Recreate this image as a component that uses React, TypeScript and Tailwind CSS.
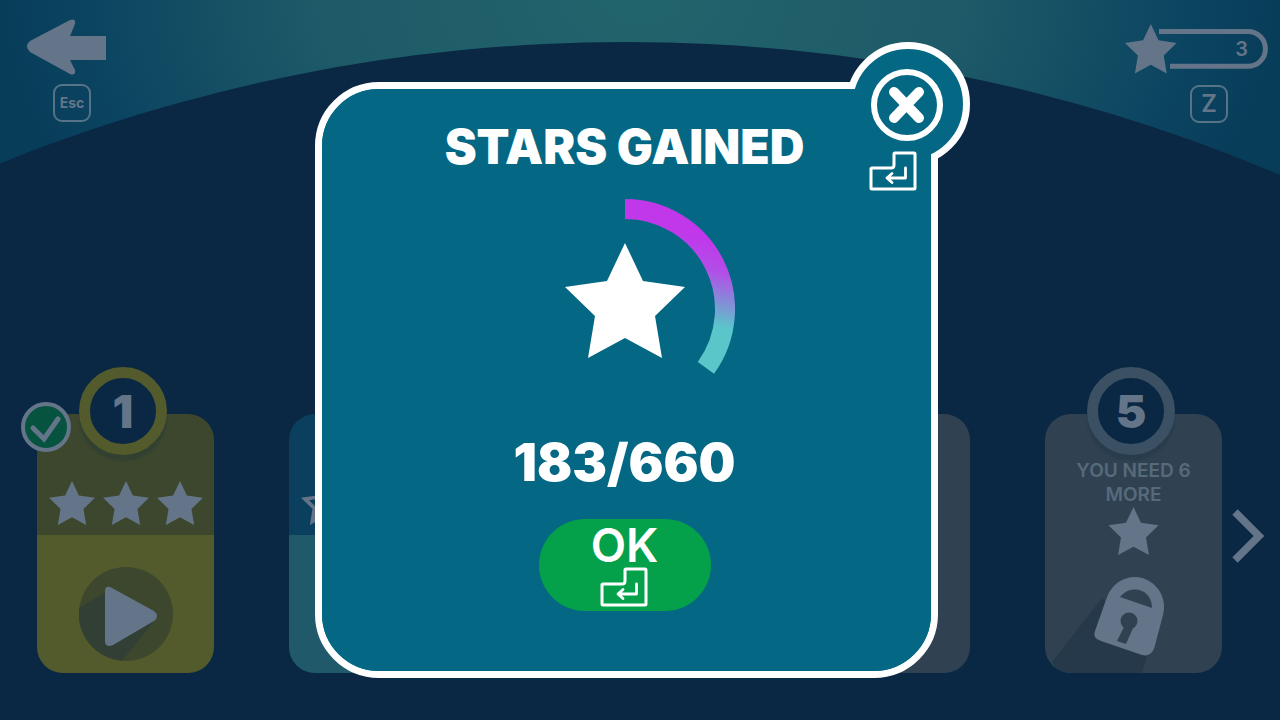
import React from 'react'
import clsx from 'clsx'

type Theme = 'olive' | 'teal' | 'locked'

interface Level {
  id: number
  theme: Theme
}

const LEVELS: Level[] = [
  { id: 1, theme: 'olive' },
  { id: 2, theme: 'teal' },
  { id: 3, theme: 'locked' },
  { id: 4, theme: 'locked' },
  { id: 5, theme: 'locked' },
]

const STAR_POINTS = '60,0 78,38 120,44 90,73 97,115 60,95 23,115 30,73 0,44 42,38'

function Star({ className, outline }: { className?: string; outline?: boolean }) {
  return (
    <svg viewBox="0 0 120 115" className={className} aria-hidden="true">
      {outline ? (
        <path
          d="M60 0L78 38L120 44L90 73L97 115L60 95L23 115L30 73L0 44L42 38ZM60 21L48 46L21 50L40 69L36 96L60 83L84 96L80 69L99 50L72 46Z"
          fill="currentColor"
          fillRule="evenodd"
        />
      ) : (
        <polygon points={STAR_POINTS} fill="currentColor" />
      )}
    </svg>
  )
}

/** Outline of the Enter key, used as a shortcut hint */
function EnterKey() {
  return (
    <svg viewBox="0 0 49 40" className="h-10 w-[49px]" fill="none" stroke="currentColor" strokeLinejoin="round" aria-hidden="true">
      <path d="M3 17H22Q25 17 25 14V3Q25 2 26 2H45Q46 2 46 3V37Q46 38 45 38H3Q2 38 2 37V18Q2 17 3 17Z" strokeWidth="3" />
      <path d="M36.500 17V27H18M23 22.500L18 27L23 31.500" strokeWidth="2.800" strokeLinecap="round" />
    </svg>
  )
}

function KeyHint({ children, className }: { children: React.ReactNode; className?: string }) {
  return (
    <kbd
      className={clsx(
        'flex size-[38px] items-center justify-center rounded-[9px] border-2 border-[#567389] font-[Inter,sans-serif] text-[#647589]',
        className
      )}
    >
      {children}
    </kbd>
  )
}

/** Teal sky with the dark planet rising over it */
function Backdrop() {
  return (
    <div className="absolute inset-0 bg-[radial-gradient(ellipse_640px_400px_at_50%_0%,#22646c_0%,#1e5a68_50%,#0a4360_88%,#083d59_100%)]">
      <svg viewBox="0 0 1280 720" preserveAspectRatio="xMidYMin slice" className="size-full" aria-hidden="true">
        <circle cx="626" cy="1716" r="1674" fill="#0a2843" />
      </svg>
    </div>
  )
}

function Header() {
  return (
    <header className="flex items-start justify-between pr-3 pl-[27px]">
      <div className="flex w-[90px] flex-col items-center pt-[19px]">
        <button type="button" aria-label="Back" className="w-full">
          <svg viewBox="0 0 90 56" className="h-14 w-full" fill="#647589" aria-hidden="true">
            <path d="M3 22L43 1Q49 -1 48 5L43 17H79V41H43L48 51Q49 57 43 55L3 33Q-3 27 3 22Z" />
          </svg>
        </button>
        <KeyHint className="mt-[9px] text-sm font-bold">Esc</KeyHint>
      </div>

      <div className="flex flex-col items-end pt-[22px]">
        <button type="button" aria-label="Stars: 3" className="grid h-[54px] w-[143px] items-center text-[#647589]">
          <svg viewBox="0 0 143 54" className="col-start-1 row-start-1 h-[54px] w-full" aria-hidden="true">
            <path d="M34 9.5H123A17.4 17.4 0 0 1 123 44.3H45" fill="none" stroke="currentColor" strokeWidth="5" />
            <polygon points={STAR_POINTS} transform="translate(0 2) scale(0.43)" fill="currentColor" />
          </svg>
          <span className="col-start-1 row-start-1 pr-5 text-right text-xl font-semibold">3</span>
        </button>
        <KeyHint className="mt-[9px] mr-10 text-2xl font-semibold">Z</KeyHint>
      </div>
    </header>
  )
}

function PlayIcon() {
  return (
    <svg viewBox="0 0 94 94" className="size-[94px]" aria-hidden="true">
      <circle cx="47" cy="47" r="47" fill="#3c472e" />
      <path d="M0 41L27 25L76 53L43 93.500A47 47 0 0 1 0 41Z" fill="#323f34" />
      <path d="M26 25Q26 17 33 21L75 44Q81 49 75 54L34 78Q26 81 26 74Z" fill="#647589" />
    </svg>
  )
}

function CompletedMark() {
  return (
    <svg viewBox="0 0 50 50" className="absolute -top-3 -left-4 size-[50px]" role="img" aria-label="Completed">
      <circle cx="25" cy="25" r="23" fill="#06533f" stroke="#647589" strokeWidth="4" />
      <path d="M12 26L23 37L37 17" fill="none" stroke="#647589" strokeWidth="5" strokeLinecap="round" />
    </svg>
  )
}

function LockIcon() {
  return (
    <svg viewBox="0 0 177 118" className="h-[118px] w-full" aria-hidden="true">
      <path d="M57 43L7 107L14 118H97L103 98Z" fill="#26394b" />
      <path
        d="M50 76L62 42C68 26 85 18 100 24C115 30 122 46 118 60L109 94Q105 102 97 100L56 86Q47 83 50 76Z"
        fill="#647589"
      />
      <g fill="#304251">
        <path d="M75 42C85 29 107 33 107 53Z" />
        <circle cx="84" cy="66" r="8.500" />
        <path d="M79 72L72 86L81 89L88 73Z" />
      </g>
    </svg>
  )
}

function LevelNumber({ level }: { level: Level }) {
  return (
    <span
      className={clsx(
        'absolute -top-[47px] left-[42px] flex size-[88px] items-center justify-center rounded-full border-[11px] bg-[#0a2843] text-[46px] font-black text-[#647589] shadow-[0_6px_2px_rgba(10,40,67,0.2)]',
        level.theme === 'olive' ? 'border-[#535b2c]' : 'border-[#3b5062]'
      )}
    >
      {level.id}
    </span>
  )
}

function LevelCard({ level }: { level: Level }) {
  const locked = level.theme === 'locked'

  return (
    <li className="relative w-[177px]">
      <div className="h-[259px] overflow-hidden rounded-[26px]">
        {locked ? (
          <div className="flex h-full flex-col items-center bg-[#304251] pt-[45px] text-center">
            {level.id === 5 && (
              <>
                <p className="w-[130px] text-[19px] leading-6 font-semibold text-[#566a7c]">YOU NEED 6 MORE</p>
                <Star className="h-12 w-[51px] text-[#647589]" />
                <LockIcon />
              </>
            )}
          </div>
        ) : (
          <>
            <div
              className={clsx(
                'flex h-[121px] items-end justify-center gap-2 pb-2.5',
                level.theme === 'olive' ? 'bg-[#3c472e]' : 'bg-[#0a3f5e]'
              )}
            >
              {[0, 1, 2].map((i) => (
                <Star key={i} outline={level.theme === 'teal'} className="h-11 w-[46px] text-[#647589]" />
              ))}
            </div>
            <div
              className={clsx(
                'flex h-[138px] justify-center pt-8',
                level.theme === 'olive' ? 'bg-[#535b2c]' : 'bg-[#205a6a]'
              )}
            >
              {level.id === 1 && (
                <button type="button" aria-label="Play level 1" className="self-start">
                  <PlayIcon />
                </button>
              )}
            </div>
          </>
        )}
      </div>
      {(level.id === 1 || level.id === 5) && <LevelNumber level={level} />}
      {level.id === 1 && <CompletedMark />}
    </li>
  )
}

function StarProgress() {
  return (
    <svg viewBox="0 0 220 220" className="mt-[26px] size-[220px]" role="img" aria-label="183 of 660 stars">
      <defs>
        <linearGradient id="ring" gradientUnits="userSpaceOnUse" x1="130" y1="26" x2="112" y2="108">
          <stop offset="0" stopColor="#c038ea" />
          <stop offset="0.35" stopColor="#b34de8" />
          <stop offset="1" stopColor="#5ac6c9" />
        </linearGradient>
      </defs>
      {/* 126 degree arc, starting at twelve o'clock */}
      <path d="M110 10A100 100 0 0 1 190.900 168.800" fill="none" stroke="url(#ring)" strokeWidth="20" />
      <polygon points={STAR_POINTS} transform="translate(50 44)" fill="#fff" />
    </svg>
  )
}

function StarsModal() {
  return (
    <div className="absolute inset-0 flex items-start justify-center pt-[82px] pr-[27px]">
      <section
        role="dialog"
        aria-labelledby="stars-title"
        className="relative w-[623px] max-w-full rounded-[64px] rounded-tr-none border-7 border-white bg-[#046885]"
      >
        {/* Bulge around the close button, the body below hides its inner half */}
        <div className="absolute -top-[47px] -right-[39px] size-[124px] rounded-full border-7 border-white bg-[#046885]" />

        <div className="relative flex flex-col items-center rounded-[57px] rounded-tr-none bg-[#046885] pt-8 pr-1 pb-[60px] text-white">
          <h2 id="stars-title" className="text-5xl leading-[52px] font-black">
            STARS GAINED
          </h2>
          <StarProgress />
          <p className="mt-4 text-[52px] leading-14 font-black">183/660</p>
          <button
            type="button"
            className="mt-7 flex h-[92px] w-[172px] flex-col items-center justify-center rounded-full bg-[#04a04a] text-[46px] leading-11 font-semibold"
          >
            OK
            <EnterKey />
          </button>

          <div className="absolute -top-5 -right-3 flex w-[74px] flex-col gap-2.5">
            <button
              type="button"
              aria-label="Close"
              className="flex size-[72px] items-center justify-center self-end rounded-full border-6 border-white"
            >
              <svg viewBox="0 0 36 36" className="size-9" stroke="currentColor" strokeWidth="10" strokeLinecap="round" aria-hidden="true">
                <path d="M5 5L30 31M30 5L5 31" />
              </svg>
            </button>
            <EnterKey />
          </div>
        </div>
      </section>
    </div>
  )
}

export default function App() {
  return (
    <div className="relative flex min-h-screen flex-col overflow-hidden bg-[#0a2843] font-[Inter,sans-serif]">
      <Backdrop />

      <div className="relative flex flex-1 flex-col justify-between pb-[47px]">
        <Header />
        <main className="flex items-center gap-2.5 pr-[15px] pl-[37px]">
          <ul className="flex flex-1 justify-between">
            {LEVELS.map((level) => (
              <LevelCard key={level.id} level={level} />
            ))}
          </ul>
          <button type="button" aria-label="Next levels" className="pb-4">
            <svg viewBox="0 0 33 54" className="h-[54px] w-[33px]" fill="none" stroke="#647589" strokeWidth="7.500" aria-hidden="true">
              <path d="M3 3L27 27L3 51" />
            </svg>
          </button>
        </main>
      </div>

      <StarsModal />
    </div>
  )
}
